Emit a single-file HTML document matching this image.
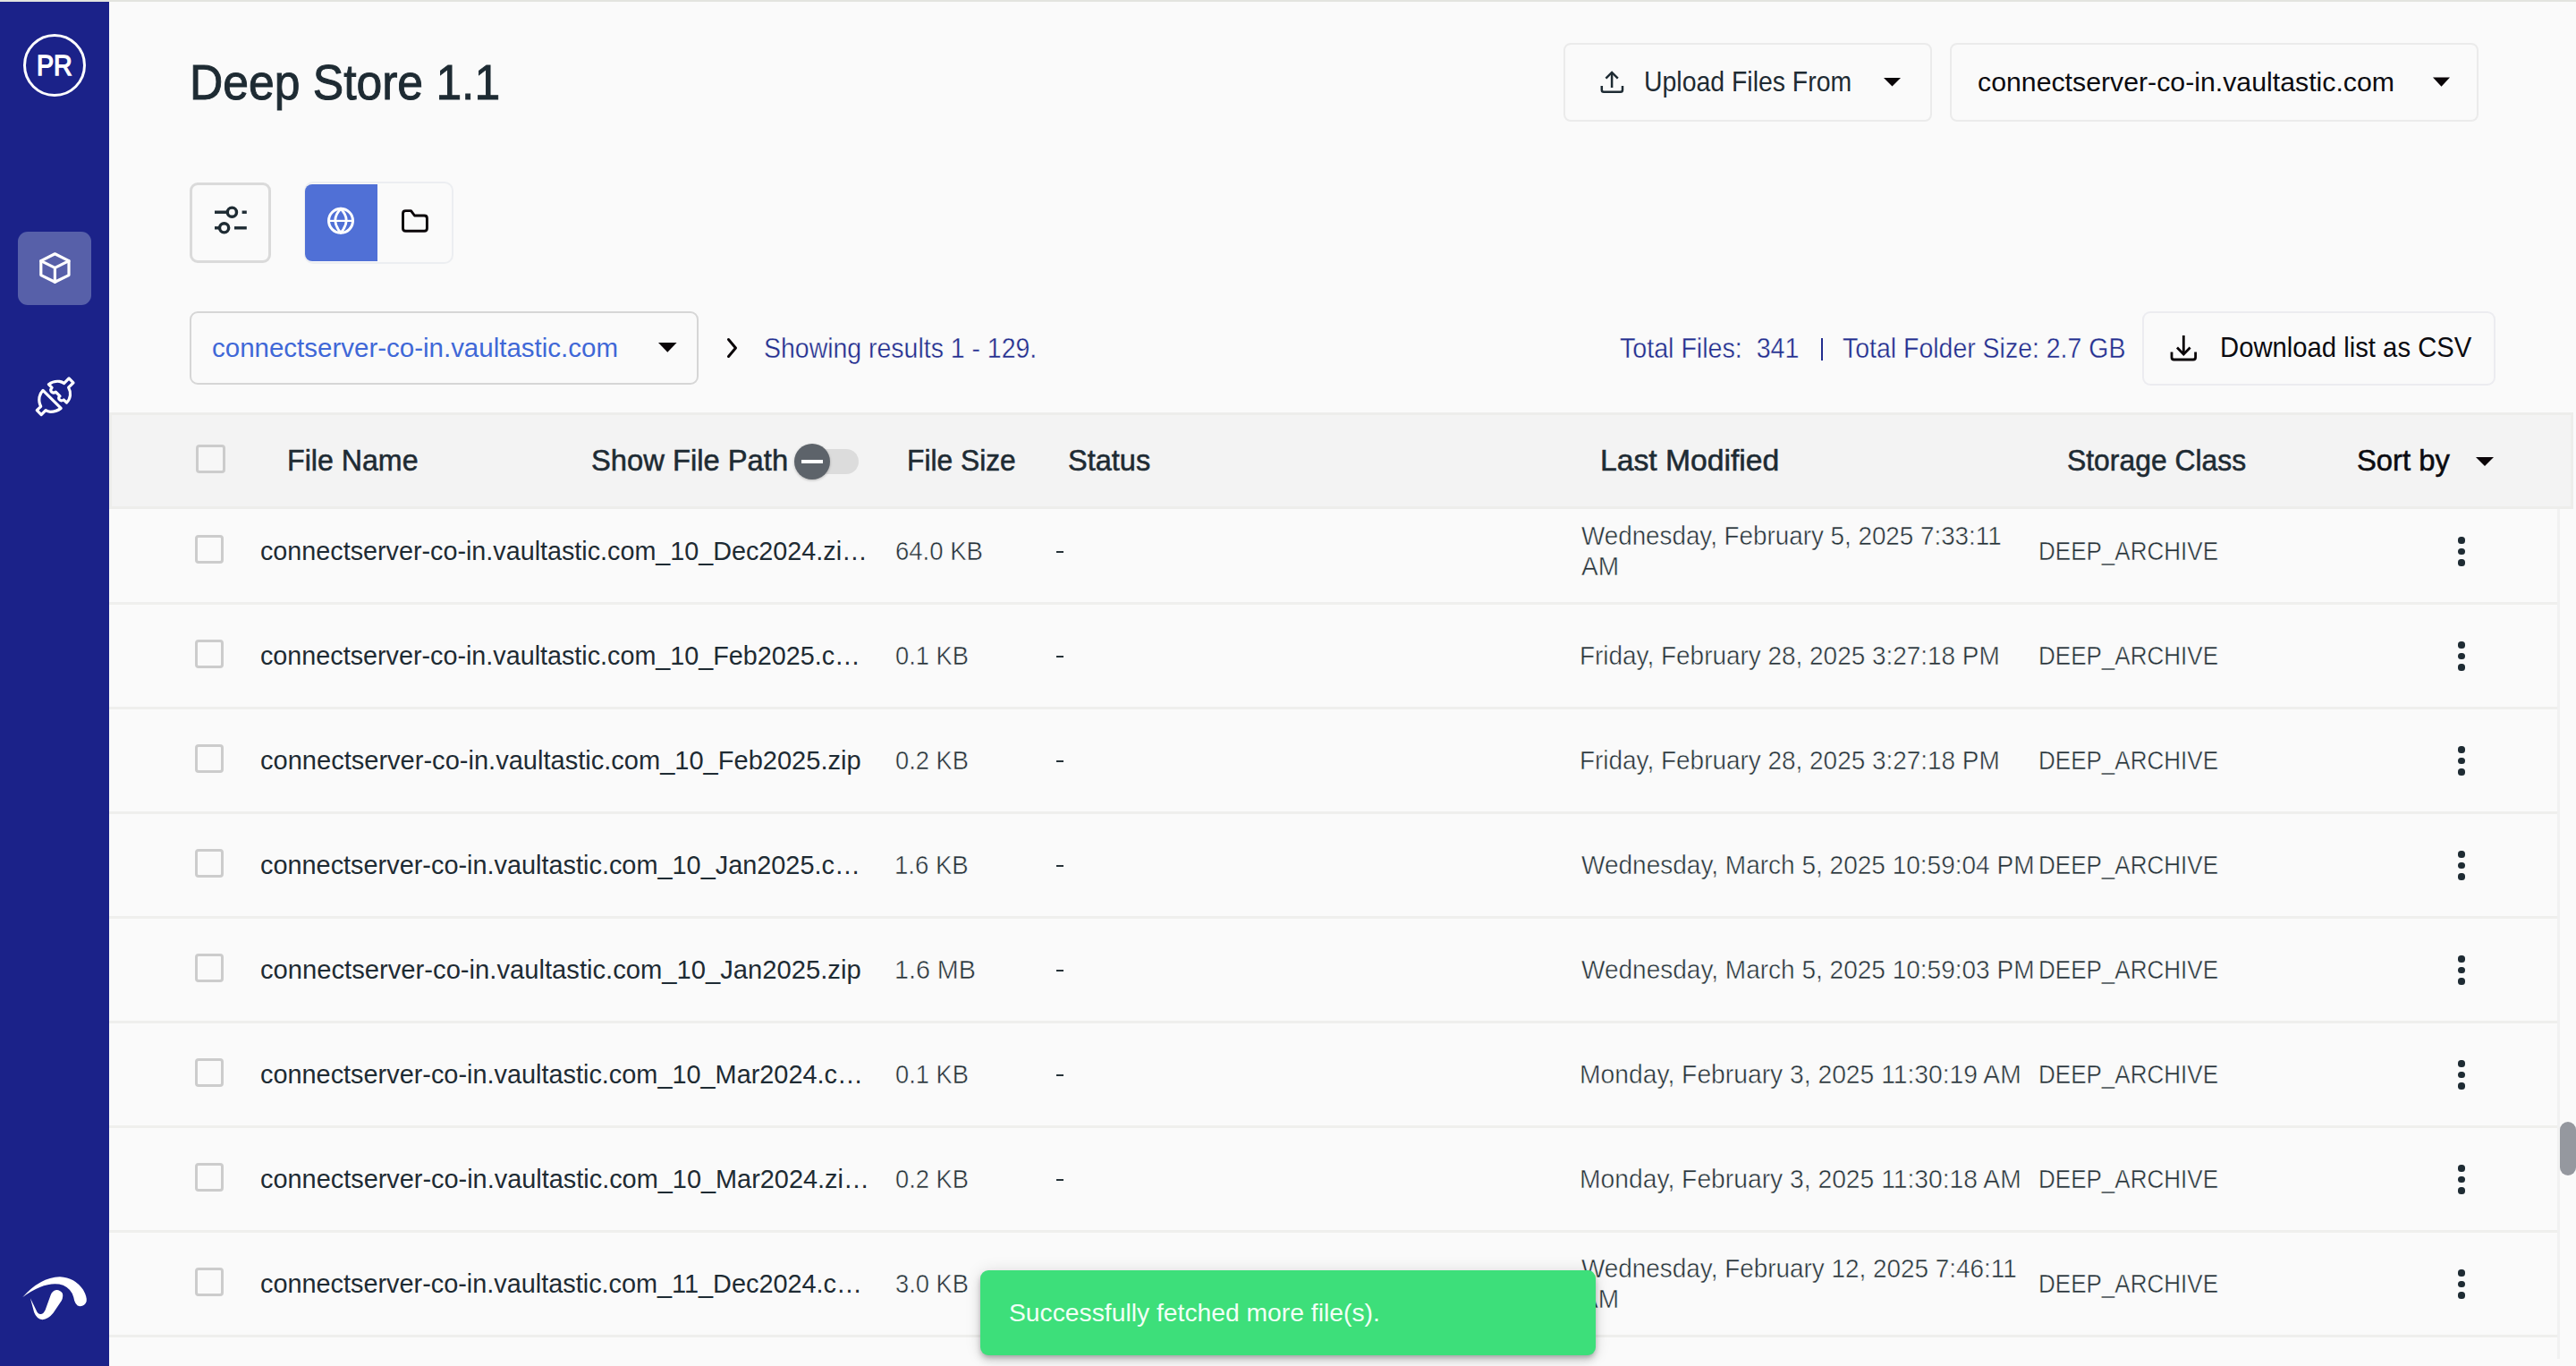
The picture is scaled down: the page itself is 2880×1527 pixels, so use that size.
<!DOCTYPE html><html><head><meta charset="utf-8"><style>
html,body{margin:0;padding:0;width:2880px;height:1527px;overflow:hidden;background:#fafafa}
.t{position:absolute;font-family:"Liberation Sans",sans-serif;line-height:1;white-space:pre}
svg{position:absolute;overflow:visible}
</style></head><body>
<div style="position:absolute;left:0px;top:0px;width:2880px;height:2px;box-sizing:border-box;background:#e3e4df"></div>
<div style="position:absolute;left:0px;top:2px;width:122px;height:1525px;box-sizing:border-box;background:#1b2289"></div>
<div style="position:absolute;left:25.8px;top:37.7px;width:70.3px;height:70.3px;box-sizing:border-box;border:3.3px solid #fff;border-radius:50%"></div>
<div class="t" style="left:41.48px;top:57.94px;font-size:31.5px;font-weight:400;color:#fff;transform:scaleX(0.9095);transform-origin:0 0;-webkit-text-stroke:1.4px #fff;">PR</div>
<div style="position:absolute;left:20px;top:259px;width:81.5px;height:81.5px;box-sizing:border-box;background:#5760a9;border-radius:11px"></div>
<svg style="left:0;top:0" width="122" height="520" viewBox="0 0 122 520"><g fill="none" stroke="#fff" stroke-width="3.2" stroke-linejoin="round" stroke-linecap="round"><path d="M61.4 283.8 L77 291.6 V307.6 L61.4 315.3 L45.8 307.6 V291.6 Z"/><path d="M45.8 291.6 L61.4 299.4 L77 291.6 M61.4 299.4 V315.3"/></g></svg>
<svg style="left:30px;top:410px" width="64" height="64" viewBox="0 0 1366 1366"><g fill="none" stroke="#fff" stroke-width="68" stroke-linejoin="round"><path d="M385 565 L815 990 Q700 1075 560 1075 Q500 1070 450 1040 L345 1145 L240 1040 L335 945 Q280 850 300 720 Q320 630 385 565 Z"/><path d="M520 420 Q640 330 780 350 Q840 360 885 395 L1005 275 L1110 380 L995 495 Q1045 580 1035 680 Q1020 790 950 855 L880 790 Q820 830 775 780 Q740 730 790 700 L690 600 Q630 640 585 595 Q550 550 600 500 Z"/></g></svg>
<svg style="left:0;top:1400px" width="122" height="127" viewBox="0 0 1312 1366"><g fill="#fff"><path d="M270 540 Q480 300 720 292 Q900 300 1000 450 Q1050 540 1040 590 Q1020 650 960 648 Q900 640 885 540 Q860 440 760 395 Q560 330 270 540 Z"/><path d="M365 550 L410 720 Q440 800 510 810 Q580 805 640 730 L740 580 Q765 530 750 490 Q720 450 680 452 Q630 460 610 510 L545 690 Q520 745 485 742 Q455 740 440 705 Z"/></g></svg>
<div class="t" style="left:211.81px;top:63.60px;font-size:56px;font-weight:400;color:#1e2b33;transform:scaleX(0.9216);transform-origin:0 0;-webkit-text-stroke:1px currentColor;">Deep Store 1.1</div>
<div style="position:absolute;left:1748px;top:48px;width:412px;height:88px;box-sizing:border-box;border:2px solid #ebebeb;border-radius:8px"></div>
<svg style="left:0;top:0" width="2880" height="160"><g fill="none" stroke="#1e2b33" stroke-width="2.5" stroke-linecap="butt" stroke-linejoin="miter"><path d="M1802.1 81 V98"/><path d="M1795.4 87.6 L1802.1 80.9 L1808.8 87.6"/><path d="M1790.8 96 V100.5 Q1790.8 102.8 1793 102.8 H1811.8 Q1814 102.8 1814 100.5 V96"/></g><path d="M2106 87 H2125 L2115.5 96.6 Z" fill="#0a0508"/><path d="M2720 86.5 H2739 L2729.5 96.8 Z" fill="#0a0508"/></svg>
<div class="t" style="left:1838.14px;top:75.88px;font-size:30.5px;font-weight:400;color:#1e2b33;transform:scaleX(0.9319);transform-origin:0 0;">Upload Files From</div>
<div style="position:absolute;left:2180px;top:48px;width:591px;height:88px;box-sizing:border-box;border:2px solid #ebebeb;border-radius:8px"></div>
<div class="t" style="left:2210.99px;top:76.61px;font-size:30px;font-weight:400;color:#0b0b10;transform:scaleX(1.0090);transform-origin:0 0;">connectserver-co-in.vaultastic.com</div>
<div style="position:absolute;left:212px;top:204px;width:91px;height:90px;box-sizing:border-box;border:3px solid #dadada;border-radius:9px"></div>
<svg style="left:0;top:0" width="600" height="320"><g fill="none" stroke="#1e2b33" stroke-width="3.4"><path d="M240 237.2 H254.3"/><circle cx="259.4" cy="237.2" r="5.1"/><path d="M270.6 237.2 H275.8"/><path d="M240 254.8 H245.5"/><circle cx="250.6" cy="254.8" r="5.1"/><path d="M262 254.8 H275.8"/></g></svg>
<div style="position:absolute;left:340px;top:203px;width:167px;height:92px;box-sizing:border-box;border:2px solid #eceef1;border-radius:10px"></div>
<div style="position:absolute;left:341px;top:205.5px;width:81px;height:86.80000000000001px;box-sizing:border-box;background:#5070d6;border-radius:8px 0 0 8px"></div>
<svg style="left:0;top:0" width="600" height="320"><g fill="none" stroke="#fff" stroke-width="3"><circle cx="381" cy="246.8" r="13.5"/><path d="M381 233.6 Q374.6 240 374.8 246.8 Q375 253.6 381 260 Q387 253.6 387.2 246.8 Q387.4 240 381 233.6 Z" stroke-width="2.8"/><path d="M368 246.9 H394" stroke-width="2.2"/></g><path d="M453.5 235.6 H459.5 L463.5 241 H474.4 Q477.4 241 477.4 244 V255.3 Q477.4 258.3 474.4 258.3 H453.5 Q450.5 258.3 450.5 255.3 V238.6 Q450.5 235.6 453.5 235.6 Z" fill="none" stroke="#0a0508" stroke-width="2.9" stroke-linejoin="round"/></svg>
<div style="position:absolute;left:212px;top:348px;width:569px;height:82px;box-sizing:border-box;border:2px solid #d6d6d6;border-radius:9px"></div>
<div class="t" style="left:237.02px;top:373.61px;font-size:30px;font-weight:400;color:#3f68d7;transform:scaleX(0.9829);transform-origin:0 0;">connectserver-co-in.vaultastic.com</div>
<svg style="left:0;top:0" width="1200" height="460"><path d="M736 383 H756.6 L746.3 393.8 Z" fill="#0a0508"/><path d="M814.5 379.5 L822.5 389 L814.5 398.5" fill="none" stroke="#0a0508" stroke-width="3" stroke-linecap="round" stroke-linejoin="round"/></svg>
<div class="t" style="left:854.07px;top:373.58px;font-size:30.5px;font-weight:400;color:#222d8e;transform:scaleX(0.9329);transform-origin:0 0;-webkit-text-stroke:0.35px #fafafa;">Showing results 1 - 129.</div>
<div class="t" style="left:1810.50px;top:373.58px;font-size:30.5px;font-weight:400;color:#222d8e;transform:scaleX(0.9382);transform-origin:0 0;-webkit-text-stroke:0.35px #fafafa;">Total Files:  341</div>
<div style="position:absolute;left:2036px;top:378px;width:2.2999999999999545px;height:24.600000000000023px;box-sizing:border-box;background:#222d8e"></div>
<div class="t" style="left:2059.60px;top:373.58px;font-size:30.5px;font-weight:400;color:#222d8e;transform:scaleX(0.9331);transform-origin:0 0;-webkit-text-stroke:0.35px #fafafa;">Total Folder Size: 2.7 GB</div>
<div style="position:absolute;left:2395px;top:348px;width:395px;height:83px;box-sizing:border-box;border:2px solid #ececf0;border-radius:9px"></div>
<svg style="left:0;top:0" width="2880" height="460"><g fill="none" stroke="#0a0508" stroke-width="2.8"><path d="M2441.3 375 V396"/><path d="M2434 388.6 L2441.3 395.9 L2448.6 388.6"/><path d="M2428 393.5 V399.5 Q2428 402 2430.5 402 H2452 Q2454.6 402 2454.6 399.5 V393.5"/></g></svg>
<div class="t" style="left:2482.08px;top:373.08px;font-size:30.5px;font-weight:400;color:#0b0b10;transform:scaleX(0.9592);transform-origin:0 0;">Download list as CSV</div>
<div style="position:absolute;left:122px;top:461px;width:2755px;height:108px;box-sizing:border-box;background:#f3f3f3;border:3px solid #ededeb"></div>
<div style="position:absolute;left:219px;top:497px;width:33px;height:32px;box-sizing:border-box;border:3px solid #cccccc;border-radius:4px;background:#f7f7f7"></div>
<div class="t" style="left:320.52px;top:498.89px;font-size:32.5px;font-weight:400;color:#1e2b33;transform:scaleX(0.9895);transform-origin:0 0;-webkit-text-stroke:0.55px currentColor;">File Name</div>
<div class="t" style="left:660.79px;top:498.89px;font-size:32.5px;font-weight:400;color:#1e2b33;transform:scaleX(1.0069);transform-origin:0 0;-webkit-text-stroke:0.55px currentColor;">Show File Path</div>
<div style="position:absolute;left:896px;top:502px;width:64px;height:28px;box-sizing:border-box;background:#dcdcdc;border-radius:14px"></div>
<div style="position:absolute;left:888px;top:496px;width:40px;height:40px;border-radius:50%;background:#5d636a;box-shadow:0 1px 3px rgba(0,0,0,.25)"></div>
<div style="position:absolute;left:896px;top:514px;width:24px;height:3.5px;box-sizing:border-box;background:#fff"></div>
<div class="t" style="left:1014.05px;top:498.89px;font-size:32.5px;font-weight:400;color:#1e2b33;transform:scaleX(0.9766);transform-origin:0 0;-webkit-text-stroke:0.55px currentColor;">File Size</div>
<div class="t" style="left:1194.00px;top:498.89px;font-size:32.5px;font-weight:400;color:#1e2b33;-webkit-text-stroke:0.55px currentColor;">Status</div>
<div class="t" style="left:1788.93px;top:498.89px;font-size:32.5px;font-weight:400;color:#1e2b33;transform:scaleX(1.0358);transform-origin:0 0;-webkit-text-stroke:0.55px currentColor;">Last Modified</div>
<div class="t" style="left:2311.02px;top:498.89px;font-size:32.5px;font-weight:400;color:#1e2b33;transform:scaleX(0.9809);transform-origin:0 0;-webkit-text-stroke:0.55px currentColor;">Storage Class</div>
<div class="t" style="left:2634.99px;top:498.89px;font-size:32.5px;font-weight:400;color:#0b0b10;transform:scaleX(1.0087);transform-origin:0 0;-webkit-text-stroke:0.55px currentColor;">Sort by</div>
<svg style="left:0;top:0" width="2880" height="600"><path d="M2768 511 H2788 L2778 521 Z" fill="#0a0508"/></svg>
<div style="position:absolute;left:122px;top:673px;width:2737px;height:3px;box-sizing:border-box;background:#efefed"></div>
<div style="position:absolute;left:218px;top:598px;width:32px;height:32px;box-sizing:border-box;border:3px solid #cccccc;border-radius:4px"></div>
<div class="t" style="left:291.04px;top:600.61px;font-size:30px;font-weight:400;color:#1e2b33;transform:scaleX(0.9578);transform-origin:0 0;">connectserver-co-in.vaultastic.com_10_Dec2024.zi…</div>
<div class="t" style="left:1001.08px;top:600.61px;font-size:30px;font-weight:400;color:#263238;transform:scaleX(0.9166);transform-origin:0 0;-webkit-text-stroke:0.5px #fafafa;">64.0 KB</div>
<div style="position:absolute;left:1181px;top:616px;width:7.5px;height:2px;box-sizing:border-box;background:#263238"></div>
<div class="t" style="left:1768.00px;top:583.61px;font-size:30px;font-weight:400;color:#263238;transform:scaleX(0.9263);transform-origin:0 0;-webkit-text-stroke:0.5px #fafafa;">Wednesday, February 5, 2025 7:33:11</div>
<div class="t" style="left:1768.00px;top:617.61px;font-size:30px;font-weight:400;color:#263238;transform:scaleX(0.9335);transform-origin:0 0;-webkit-text-stroke:0.5px #fafafa;">AM</div>
<div class="t" style="left:2278.87px;top:600.61px;font-size:30px;font-weight:400;color:#263238;transform:scaleX(0.8674);transform-origin:0 0;-webkit-text-stroke:0.5px #fafafa;">DEEP_ARCHIVE</div>
<div style="position:absolute;left:2748.4px;top:600.4px;width:7.2px;height:7.2px;border-radius:50%;background:#1e2b33"></div>
<div style="position:absolute;left:2748.4px;top:612.9px;width:7.2px;height:7.2px;border-radius:50%;background:#1e2b33"></div>
<div style="position:absolute;left:2748.4px;top:625.4px;width:7.2px;height:7.2px;border-radius:50%;background:#1e2b33"></div>
<div style="position:absolute;left:122px;top:790px;width:2737px;height:3px;box-sizing:border-box;background:#efefed"></div>
<div style="position:absolute;left:218px;top:715px;width:32px;height:32px;box-sizing:border-box;border:3px solid #cccccc;border-radius:4px"></div>
<div class="t" style="left:291.04px;top:717.61px;font-size:30px;font-weight:400;color:#1e2b33;transform:scaleX(0.9578);transform-origin:0 0;">connectserver-co-in.vaultastic.com_10_Feb2025.c…</div>
<div class="t" style="left:1001.09px;top:717.61px;font-size:30px;font-weight:400;color:#263238;transform:scaleX(0.9086);transform-origin:0 0;-webkit-text-stroke:0.5px #fafafa;">0.1 KB</div>
<div style="position:absolute;left:1181px;top:733px;width:7.5px;height:2px;box-sizing:border-box;background:#263238"></div>
<div class="t" style="left:1766.14px;top:717.61px;font-size:30px;font-weight:400;color:#263238;transform:scaleX(0.9307);transform-origin:0 0;-webkit-text-stroke:0.5px #fafafa;">Friday, February 28, 2025 3:27:18 PM</div>
<div class="t" style="left:2278.87px;top:717.61px;font-size:30px;font-weight:400;color:#263238;transform:scaleX(0.8674);transform-origin:0 0;-webkit-text-stroke:0.5px #fafafa;">DEEP_ARCHIVE</div>
<div style="position:absolute;left:2748.4px;top:717.4px;width:7.2px;height:7.2px;border-radius:50%;background:#1e2b33"></div>
<div style="position:absolute;left:2748.4px;top:729.9px;width:7.2px;height:7.2px;border-radius:50%;background:#1e2b33"></div>
<div style="position:absolute;left:2748.4px;top:742.4px;width:7.2px;height:7.2px;border-radius:50%;background:#1e2b33"></div>
<div style="position:absolute;left:122px;top:907px;width:2737px;height:3px;box-sizing:border-box;background:#efefed"></div>
<div style="position:absolute;left:218px;top:832px;width:32px;height:32px;box-sizing:border-box;border:3px solid #cccccc;border-radius:4px"></div>
<div class="t" style="left:291.03px;top:834.61px;font-size:30px;font-weight:400;color:#1e2b33;transform:scaleX(0.9682);transform-origin:0 0;">connectserver-co-in.vaultastic.com_10_Feb2025.zip</div>
<div class="t" style="left:1001.09px;top:834.61px;font-size:30px;font-weight:400;color:#263238;transform:scaleX(0.9086);transform-origin:0 0;-webkit-text-stroke:0.5px #fafafa;">0.2 KB</div>
<div style="position:absolute;left:1181px;top:850px;width:7.5px;height:2px;box-sizing:border-box;background:#263238"></div>
<div class="t" style="left:1766.14px;top:834.61px;font-size:30px;font-weight:400;color:#263238;transform:scaleX(0.9307);transform-origin:0 0;-webkit-text-stroke:0.5px #fafafa;">Friday, February 28, 2025 3:27:18 PM</div>
<div class="t" style="left:2278.87px;top:834.61px;font-size:30px;font-weight:400;color:#263238;transform:scaleX(0.8674);transform-origin:0 0;-webkit-text-stroke:0.5px #fafafa;">DEEP_ARCHIVE</div>
<div style="position:absolute;left:2748.4px;top:834.4px;width:7.2px;height:7.2px;border-radius:50%;background:#1e2b33"></div>
<div style="position:absolute;left:2748.4px;top:846.9px;width:7.2px;height:7.2px;border-radius:50%;background:#1e2b33"></div>
<div style="position:absolute;left:2748.4px;top:859.4px;width:7.2px;height:7.2px;border-radius:50%;background:#1e2b33"></div>
<div style="position:absolute;left:122px;top:1024px;width:2737px;height:3px;box-sizing:border-box;background:#efefed"></div>
<div style="position:absolute;left:218px;top:949px;width:32px;height:32px;box-sizing:border-box;border:3px solid #cccccc;border-radius:4px"></div>
<div class="t" style="left:291.04px;top:951.61px;font-size:30px;font-weight:400;color:#1e2b33;transform:scaleX(0.9624);transform-origin:0 0;">connectserver-co-in.vaultastic.com_10_Jan2025.c…</div>
<div class="t" style="left:1000.16px;top:951.61px;font-size:30px;font-weight:400;color:#263238;transform:scaleX(0.9190);transform-origin:0 0;-webkit-text-stroke:0.5px #fafafa;">1.6 KB</div>
<div style="position:absolute;left:1181px;top:967px;width:7.5px;height:2px;box-sizing:border-box;background:#263238"></div>
<div class="t" style="left:1768.00px;top:951.61px;font-size:30px;font-weight:400;color:#263238;transform:scaleX(0.9335);transform-origin:0 0;-webkit-text-stroke:0.5px #fafafa;">Wednesday, March 5, 2025 10:59:04 PM</div>
<div class="t" style="left:2278.87px;top:951.61px;font-size:30px;font-weight:400;color:#263238;transform:scaleX(0.8674);transform-origin:0 0;-webkit-text-stroke:0.5px #fafafa;">DEEP_ARCHIVE</div>
<div style="position:absolute;left:2748.4px;top:951.4px;width:7.2px;height:7.2px;border-radius:50%;background:#1e2b33"></div>
<div style="position:absolute;left:2748.4px;top:963.9px;width:7.2px;height:7.2px;border-radius:50%;background:#1e2b33"></div>
<div style="position:absolute;left:2748.4px;top:976.4px;width:7.2px;height:7.2px;border-radius:50%;background:#1e2b33"></div>
<div style="position:absolute;left:122px;top:1141px;width:2737px;height:3px;box-sizing:border-box;background:#efefed"></div>
<div style="position:absolute;left:218px;top:1066px;width:32px;height:32px;box-sizing:border-box;border:3px solid #cccccc;border-radius:4px"></div>
<div class="t" style="left:291.03px;top:1068.61px;font-size:30px;font-weight:400;color:#1e2b33;transform:scaleX(0.9729);transform-origin:0 0;">connectserver-co-in.vaultastic.com_10_Jan2025.zip</div>
<div class="t" style="left:1000.09px;top:1068.61px;font-size:30px;font-weight:400;color:#263238;transform:scaleX(0.9562);transform-origin:0 0;-webkit-text-stroke:0.5px #fafafa;">1.6 MB</div>
<div style="position:absolute;left:1181px;top:1084px;width:7.5px;height:2px;box-sizing:border-box;background:#263238"></div>
<div class="t" style="left:1768.00px;top:1068.61px;font-size:30px;font-weight:400;color:#263238;transform:scaleX(0.9335);transform-origin:0 0;-webkit-text-stroke:0.5px #fafafa;">Wednesday, March 5, 2025 10:59:03 PM</div>
<div class="t" style="left:2278.87px;top:1068.61px;font-size:30px;font-weight:400;color:#263238;transform:scaleX(0.8674);transform-origin:0 0;-webkit-text-stroke:0.5px #fafafa;">DEEP_ARCHIVE</div>
<div style="position:absolute;left:2748.4px;top:1068.4px;width:7.2px;height:7.2px;border-radius:50%;background:#1e2b33"></div>
<div style="position:absolute;left:2748.4px;top:1080.9px;width:7.2px;height:7.2px;border-radius:50%;background:#1e2b33"></div>
<div style="position:absolute;left:2748.4px;top:1093.4px;width:7.2px;height:7.2px;border-radius:50%;background:#1e2b33"></div>
<div style="position:absolute;left:122px;top:1258px;width:2737px;height:3px;box-sizing:border-box;background:#efefed"></div>
<div style="position:absolute;left:218px;top:1183px;width:32px;height:32px;box-sizing:border-box;border:3px solid #cccccc;border-radius:4px"></div>
<div class="t" style="left:291.04px;top:1185.61px;font-size:30px;font-weight:400;color:#1e2b33;transform:scaleX(0.9622);transform-origin:0 0;">connectserver-co-in.vaultastic.com_10_Mar2024.c…</div>
<div class="t" style="left:1001.09px;top:1185.61px;font-size:30px;font-weight:400;color:#263238;transform:scaleX(0.9086);transform-origin:0 0;-webkit-text-stroke:0.5px #fafafa;">0.1 KB</div>
<div style="position:absolute;left:1181px;top:1201px;width:7.5px;height:2px;box-sizing:border-box;background:#263238"></div>
<div class="t" style="left:1766.12px;top:1185.61px;font-size:30px;font-weight:400;color:#263238;transform:scaleX(0.9418);transform-origin:0 0;-webkit-text-stroke:0.5px #fafafa;">Monday, February 3, 2025 11:30:19 AM</div>
<div class="t" style="left:2278.87px;top:1185.61px;font-size:30px;font-weight:400;color:#263238;transform:scaleX(0.8674);transform-origin:0 0;-webkit-text-stroke:0.5px #fafafa;">DEEP_ARCHIVE</div>
<div style="position:absolute;left:2748.4px;top:1185.4px;width:7.2px;height:7.2px;border-radius:50%;background:#1e2b33"></div>
<div style="position:absolute;left:2748.4px;top:1197.9px;width:7.2px;height:7.2px;border-radius:50%;background:#1e2b33"></div>
<div style="position:absolute;left:2748.4px;top:1210.4px;width:7.2px;height:7.2px;border-radius:50%;background:#1e2b33"></div>
<div style="position:absolute;left:122px;top:1375px;width:2737px;height:3px;box-sizing:border-box;background:#efefed"></div>
<div style="position:absolute;left:218px;top:1300px;width:32px;height:32px;box-sizing:border-box;border:3px solid #cccccc;border-radius:4px"></div>
<div class="t" style="left:291.04px;top:1302.61px;font-size:30px;font-weight:400;color:#1e2b33;transform:scaleX(0.9630);transform-origin:0 0;">connectserver-co-in.vaultastic.com_10_Mar2024.zi…</div>
<div class="t" style="left:1001.09px;top:1302.61px;font-size:30px;font-weight:400;color:#263238;transform:scaleX(0.9086);transform-origin:0 0;-webkit-text-stroke:0.5px #fafafa;">0.2 KB</div>
<div style="position:absolute;left:1181px;top:1318px;width:7.5px;height:2px;box-sizing:border-box;background:#263238"></div>
<div class="t" style="left:1766.12px;top:1302.61px;font-size:30px;font-weight:400;color:#263238;transform:scaleX(0.9418);transform-origin:0 0;-webkit-text-stroke:0.5px #fafafa;">Monday, February 3, 2025 11:30:18 AM</div>
<div class="t" style="left:2278.87px;top:1302.61px;font-size:30px;font-weight:400;color:#263238;transform:scaleX(0.8674);transform-origin:0 0;-webkit-text-stroke:0.5px #fafafa;">DEEP_ARCHIVE</div>
<div style="position:absolute;left:2748.4px;top:1302.4px;width:7.2px;height:7.2px;border-radius:50%;background:#1e2b33"></div>
<div style="position:absolute;left:2748.4px;top:1314.9px;width:7.2px;height:7.2px;border-radius:50%;background:#1e2b33"></div>
<div style="position:absolute;left:2748.4px;top:1327.4px;width:7.2px;height:7.2px;border-radius:50%;background:#1e2b33"></div>
<div style="position:absolute;left:122px;top:1492px;width:2737px;height:3px;box-sizing:border-box;background:#efefed"></div>
<div style="position:absolute;left:218px;top:1417px;width:32px;height:32px;box-sizing:border-box;border:3px solid #cccccc;border-radius:4px"></div>
<div class="t" style="left:291.04px;top:1419.61px;font-size:30px;font-weight:400;color:#1e2b33;transform:scaleX(0.9615);transform-origin:0 0;">connectserver-co-in.vaultastic.com_11_Dec2024.c…</div>
<div class="t" style="left:1001.09px;top:1419.61px;font-size:30px;font-weight:400;color:#263238;transform:scaleX(0.9086);transform-origin:0 0;-webkit-text-stroke:0.5px #fafafa;">3.0 KB</div>
<div style="position:absolute;left:1181px;top:1435px;width:7.5px;height:2px;box-sizing:border-box;background:#263238"></div>
<div class="t" style="left:1768.00px;top:1402.61px;font-size:30px;font-weight:400;color:#263238;transform:scaleX(0.9293);transform-origin:0 0;-webkit-text-stroke:0.5px #fafafa;">Wednesday, February 12, 2025 7:46:11</div>
<div class="t" style="left:1768.00px;top:1436.61px;font-size:30px;font-weight:400;color:#263238;transform:scaleX(0.9335);transform-origin:0 0;-webkit-text-stroke:0.5px #fafafa;">AM</div>
<div class="t" style="left:2278.87px;top:1419.61px;font-size:30px;font-weight:400;color:#263238;transform:scaleX(0.8674);transform-origin:0 0;-webkit-text-stroke:0.5px #fafafa;">DEEP_ARCHIVE</div>
<div style="position:absolute;left:2748.4px;top:1419.4px;width:7.2px;height:7.2px;border-radius:50%;background:#1e2b33"></div>
<div style="position:absolute;left:2748.4px;top:1431.9px;width:7.2px;height:7.2px;border-radius:50%;background:#1e2b33"></div>
<div style="position:absolute;left:2748.4px;top:1444.4px;width:7.2px;height:7.2px;border-radius:50%;background:#1e2b33"></div>
<div style="position:absolute;left:2859px;top:569px;width:3px;height:950px;box-sizing:border-box;background:#f1f1f1"></div>
<div style="position:absolute;left:2862px;top:1254px;width:18px;height:60px;box-sizing:border-box;background:#95989f;border-radius:9px"></div>
<div style="position:absolute;left:1096px;top:1420px;width:688px;height:95px;border-radius:9px;background:#3ddf7a;box-shadow:0 3px 5px -1px rgba(0,0,0,.2),0 6px 10px 0 rgba(0,0,0,.14),0 1px 18px 0 rgba(0,0,0,.12)"></div>
<div class="t" style="left:1127.99px;top:1454.00px;font-size:28px;font-weight:400;color:#f2fff6;transform:scaleX(1.0097);transform-origin:0 0;">Successfully fetched more file(s).</div>
</body></html>
